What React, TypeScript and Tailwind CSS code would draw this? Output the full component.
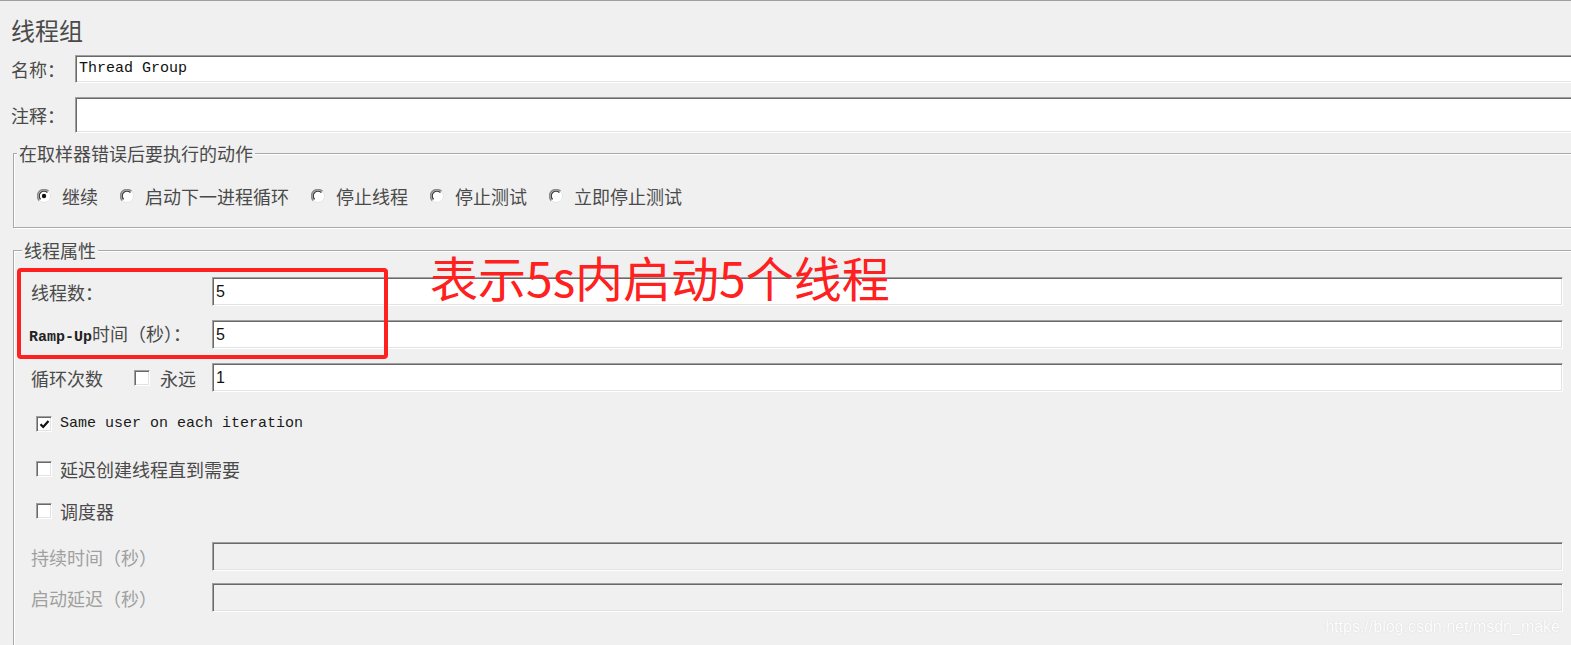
import type { ReactNode } from 'react';
import clsx from 'clsx';

const cjk = "font-['Noto_Sans_CJK_SC','Noto_Sans',sans-serif]";
const mono = "font-['Liberation_Mono','Noto_Sans_CJK_SC',monospace]";

type BoxProps = {
  children?: ReactNode;
  disabled?: boolean;
  className?: string;
};

function SunkenBox({ children, disabled, className }: BoxProps) {
  return (
    <div
      className={clsx(
        'flex items-center border border-t-[#a0a0a0] border-l-[#a0a0a0] border-r-white border-b-white pl-[3px] shadow-[inset_1px_1px_0_#696969,inset_-1px_-1px_0_#e3e3e3]',
        disabled ? 'bg-[#f0f0f0]' : 'bg-white',
        className,
      )}
    >
      {children}
    </div>
  );
}

function Radio({ checked }: { checked?: boolean }) {
  return (
    <svg width="14" height="14" viewBox="0 0 14 14" className="shrink-0">
      <circle cx="7" cy="7" r="6.2" fill="#fff" />
      <path d="M11.6 2.4A6.4 6.4 0 0 0 2.4 11.6" fill="none" stroke="#8a8a8a" strokeWidth="1.6" />
      <path d="M10.4 3.6A4.8 4.8 0 0 0 3.6 10.4" fill="none" stroke="#3a3a3a" strokeWidth="1.3" />
      <path d="M2.4 11.6A6.4 6.4 0 0 0 11.6 2.4" fill="none" stroke="#e6e6e6" strokeWidth="1" />
      {checked ? <circle cx="7" cy="7" r="2.2" fill="#111" /> : null}
    </svg>
  );
}

function Checkbox({ checked }: { checked?: boolean }) {
  return (
    <span className="flex h-[16px] w-[16px] shrink-0 items-center justify-center border border-t-[#a0a0a0] border-l-[#a0a0a0] border-r-white border-b-white bg-white shadow-[inset_1px_1px_0_#696969,inset_-1px_-1px_0_#e3e3e3]">
      {checked ? (
        <svg width="11" height="11" viewBox="0 0 11 11">
          <path d="M1.5 5.2 L4.2 8 L9.5 2" fill="none" stroke="#111" strokeWidth="2.2" />
        </svg>
      ) : null}
    </span>
  );
}

function GroupBox({
  title,
  titleClass,
  className,
  children,
}: {
  title: string;
  titleClass: string;
  className?: string;
  children: ReactNode;
}) {
  return (
    <div
      className={clsx(
        'relative border border-[#a9a9a9] shadow-[inset_1px_1px_0_#fff,1px_1px_0_#fff]',
        className,
      )}
    >
      <span
        className={clsx(
          'absolute -top-[13px] bg-[#f0f0f0] px-[2px] text-[18px] leading-[24px] text-[#4a4a4a]',
          titleClass,
        )}
      >
        {title}
      </span>
      {children}
    </div>
  );
}

const actions = [
  { label: '继续', checked: true },
  { label: '启动下一进程循环' },
  { label: '停止线程' },
  { label: '停止测试' },
  { label: '立即停止测试' },
];

export default function App() {
  return (
    <div
      className={clsx(
        'relative h-[645px] w-[1571px] overflow-hidden border-t border-[#a0a0a0] bg-[#f0f0f0] text-[18px] text-[#4a4a4a]',
        cjk,
      )}
    >
      <div className="pl-[11px] pt-[14px] text-[24px] leading-[30px]">线程组</div>

      <div className="mt-[10px] flex h-[28px] items-center pl-[11px]">
        <span className="w-[64px] shrink-0 leading-none">名称：</span>
        <SunkenBox className="-mr-[4px] h-[28px] flex-1">
          <span className={clsx('text-[15px] text-[#111]', mono)}>Thread Group</span>
        </SunkenBox>
      </div>

      <div className="mt-[14px] flex h-[36px] items-center pl-[11px]">
        <span className="w-[64px] shrink-0 leading-none">注释：</span>
        <SunkenBox className="-mr-[4px] h-[36px] flex-1" />
      </div>

      <GroupBox
        title="在取样器错误后要执行的动作"
        titleClass="left-[3px]"
        className="-mr-[8px] ml-[13px] mt-[20px] h-[75px]"
      >
        <div className="mt-[32px] flex h-[20px] items-center gap-[22px] pl-[23px]">
          {actions.map((a) => (
            <div key={a.label} className="flex items-center gap-[11px]">
              <Radio checked={a.checked} />
              <span className="leading-none">{a.label}</span>
            </div>
          ))}
        </div>
      </GroupBox>

      <GroupBox
        title="线程属性"
        titleClass="left-[8px]"
        className="-mr-[8px] ml-[13px] mt-[22px] h-[420px]"
      >
        <div className="flex flex-col pl-[17px]">
          <div className="mt-[26px] flex items-center">
            <span className="w-[181px] shrink-0 leading-none">线程数：</span>
            <SunkenBox className="h-[29px] w-[1351px]">
              <span className="font-['Liberation_Sans',sans-serif] text-[16px] text-[#111]">5</span>
            </SunkenBox>
          </div>
          <div className="mt-[14px] flex items-center">
            <span className="-ml-[2px] w-[183px] shrink-0 leading-none">
              <span className={clsx('text-[15px] font-semibold text-[#222]', mono)}>Ramp-Up</span>
              时间（秒）：
            </span>
            <SunkenBox className="h-[29px] w-[1351px]">
              <span className="font-['Liberation_Sans',sans-serif] text-[16px] text-[#111]">5</span>
            </SunkenBox>
          </div>
          <div className="mt-[14px] flex items-center">
            <div className="flex w-[181px] shrink-0 items-center">
              <span className="w-[103px] shrink-0 leading-none">循环次数</span>
              <Checkbox />
              <span className="ml-[10px] leading-none">永远</span>
            </div>
            <SunkenBox className="h-[29px] w-[1351px]">
              <span className="font-['Liberation_Sans',sans-serif] text-[16px] text-[#111]">1</span>
            </SunkenBox>
          </div>

          <div className="ml-[5px] mt-[22px] flex h-[20px] items-center gap-[8px]">
            <Checkbox checked />
            <span className={clsx('text-[15px] font-medium text-[#1a1a1a]', mono)}>
              Same user on each iteration
            </span>
          </div>
          <div className="ml-[5px] mt-[25px] flex h-[20px] items-center gap-[8px]">
            <Checkbox />
            <span className="leading-none">延迟创建线程直到需要</span>
          </div>
          <div className="ml-[5px] mt-[22px] flex h-[20px] items-center gap-[8px]">
            <Checkbox />
            <span className="leading-none">调度器</span>
          </div>

          <div className="mt-[21px] flex items-center">
            <span className="w-[181px] shrink-0 leading-none text-[#a0a0a0]">持续时间（秒）</span>
            <SunkenBox disabled className="h-[29px] w-[1351px]" />
          </div>
          <div className="mt-[12px] flex items-center">
            <span className="w-[181px] shrink-0 leading-none text-[#a0a0a0]">启动延迟（秒）</span>
            <SunkenBox disabled className="h-[29px] w-[1351px]" />
          </div>
        </div>
      </GroupBox>

      {/* annotation overlay */}
      <div className="pointer-events-none absolute left-[17px] top-[267px] h-[91px] w-[371px] rounded-[4px] border-[4px] border-[#ff2020]" />
      <div className="pointer-events-none absolute left-[430px] top-[251px] text-[48px] leading-[48px] text-[#ff2020]">
        表示5s内启动5个线程
      </div>

      <div className="pointer-events-none absolute bottom-[9px] right-[11px] font-['Liberation_Sans',sans-serif] text-[16px] leading-[18px] text-white [text-shadow:0_0_1px_#c8c8c8]">
        https://blog.csdn.net/msdn_make
      </div>
    </div>
  );
}
